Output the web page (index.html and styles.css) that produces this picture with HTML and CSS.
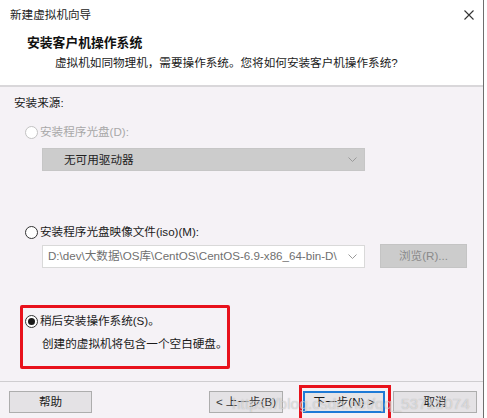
FILE: index.html
```html
<!DOCTYPE html>
<html lang="zh-CN">
<head>
<meta charset="utf-8">
<title>新建虚拟机向导</title>
<link rel="stylesheet" href="styles.css">
</head>
<body>
<div class="window">
  <div class="header">
    <div class="titlebar">
      <span class="title">新建虚拟机向导</span>
      <svg class="close" width="10" height="10" viewBox="0 0 10 10"><path d="M0.5 0.5 L9.5 9.5 M9.5 0.5 L0.5 9.5" stroke="#333" stroke-width="1.1" fill="none"/></svg>
    </div>
    <div class="heading">安装客户机操作系统</div>
    <div class="subtitle">虚拟机如同物理机，需要操作系统。您将如何安装客户机操作系统?</div>
  </div>

  <div class="content">
    <div class="src-label">安装来源:</div>

    <div class="option disabled opt1">
      <span class="radio"></span>
      <span>安装程序光盘(D):</span>
    </div>
    <div class="dropdown">
      <span>无可用驱动器</span>
      <svg class="chev" width="9" height="5" viewBox="0 0 9 5"><path d="M0.5 0.5 L4.5 4.5 L8.5 0.5" stroke="#9a9a9a" stroke-width="1" fill="none"/></svg>
    </div>

    <div class="option opt2">
      <span class="radio"></span>
      <span>安装程序光盘映像文件(iso)(M):</span>
    </div>
    <div class="iso-row">
      <div class="combo">
        <span class="path">D:\dev\大数据\OS库\CentOS\CentOS-6.9-x86_64-bin-D\</span>
        <svg class="chev" width="9" height="5" viewBox="0 0 9 5"><path d="M0.5 0.5 L4.5 4.5 L8.5 0.5" stroke="#9a9a9a" stroke-width="1" fill="none"/></svg>
      </div>
      <div class="browse">浏览(R)...</div>
    </div>

    <div class="later-box">
      <div class="option opt3">
        <span class="radio checked"></span>
        <span>稍后安装操作系统(S)。</span>
      </div>
      <div class="later-desc">创建的虚拟机将包含一个空白硬盘。</div>
    </div>
  </div>

  <div class="footer">
    <div class="btn help">帮助</div>
    <div class="spacer"></div>
    <div class="btn back">&lt; 上一步(B)</div>
    <div class="mark">
      <div class="btn next">下一步(N) &gt;</div>
    </div>
    <div class="btn cancel">取消</div>
    <div class="watermark">https://blog.csdn.net/qq_53715074</div>
  </div>
</div>
</body>
</html>
```

FILE: styles.css
```css
* { box-sizing: border-box; }

html, body {
  margin: 0;
  padding: 0;
  background: #ffffff;
}

body {
  font-family: "Liberation Sans", "Noto Sans CJK SC", sans-serif;
  font-size: 11.6px;
  line-height: 16px;
  color: #1a1a1a;
}

.window {
  width: 484px;
  height: 418px;
  background: #f5f2f6;
  border-right: 1px solid #6e6e6e;
  overflow: hidden;
  display: flex;
  flex-direction: column;
}

/* header */
.header {
  height: 87px;
  flex: none;
  background: #ffffff;
  border-bottom: 2px solid #d9d7da;
}

.titlebar {
  height: 30px;
  display: flex;
  align-items: center;
  justify-content: space-between;
  padding: 0 9px 0 10px;
}

.title {
  font-size: 11.6px;
  color: #222;
}

.close { display: block; }

.heading {
  margin-top: 5px;
  padding-left: 27px;
  font-size: 12.8px;
  font-weight: bold;
  color: #111;
}

.subtitle {
  margin-top: 4px;
  padding-left: 55px;
  color: #1a1a1a;
  white-space: nowrap;
}

/* content */
.content {
  flex: none;
  height: 294px;
  padding-left: 14px;
  display: flex;
  flex-direction: column;
  align-items: flex-start;
}

.src-label {
  margin-top: 8px;
}

.option {
  display: flex;
  align-items: center;
  gap: 2px;
  white-space: nowrap;
}

.radio {
  width: 13px;
  height: 13px;
  border-radius: 50%;
  border: 1px solid #333;
  background: #fff;
  display: inline-flex;
  align-items: center;
  justify-content: center;
  flex: none;
}

.radio.checked::after {
  content: "";
  width: 7px;
  height: 7px;
  border-radius: 50%;
  background: #1a1a1a;
}

.option.disabled { color: #a8a8a8; }
.option.disabled .radio { border-color: #c2c2c2; }

.opt1 {
  margin-top: 13px;
  margin-left: 11px;
}

.dropdown {
  margin-top: 8px;
  margin-left: 28px;
  width: 323px;
  height: 23px;
  background: #cccccc;
  border: 1px solid #c6c6c6;
  display: flex;
  align-items: center;
  justify-content: space-between;
  padding: 0 7px 0 21px;
  color: #222;
}

.opt2 {
  margin-top: 53px;
  margin-left: 11px;
}

.iso-row {
  margin-top: 4px;
  margin-left: 28px;
  display: flex;
  align-items: center;
  gap: 15px;
}

.combo {
  width: 323px;
  height: 23px;
  background: #fff;
  border: 1px solid #d9d9d9;
  display: flex;
  align-items: center;
  padding: 0 7px 0 5px;
  gap: 6px;
}

.combo .path {
  flex: 1;
  white-space: nowrap;
  overflow: hidden;
  color: #6f6f6f;
}

.chev { display: block; flex: none; }

.browse {
  width: 87px;
  height: 24px;
  background: #cccccc;
  border: 1px solid #c4c4c4;
  color: #8a8a8a;
  display: flex;
  align-items: center;
  justify-content: center;
}

.later-box {
  margin-top: 37px;
  margin-left: 6px;
  width: 210px;
  height: 64px;
  border: 3px solid #e8121c;
  border-radius: 2px;
  padding: 5px 0 0 2px;
}

.later-desc {
  margin-top: 7px;
  padding-left: 17px;
  white-space: nowrap;
}

/* footer */
.footer {
  position: relative;
  flex: 1;
  border-top: 1px solid #cfcdd0;
  display: flex;
  align-items: flex-start;
  padding: 0 6px 0 9px;
}

.spacer { flex: 1; }

.btn {
  height: 22px;
  margin-top: 9px;
  background: #e4e2e5;
  border: 1px solid #adadad;
  display: flex;
  align-items: center;
  justify-content: center;
  color: #1a1a1a;
  flex: none;
  white-space: nowrap;
}

.help { width: 83px; }

.back {
  width: 74px;
  margin-right: 16px;
  color: #333;
}

.mark {
  margin-top: 3px;
  border: 3px solid #e8121c;
  padding: 3px 3px 6px 1px;
  margin-right: 2px;
}

.next {
  margin-top: 0;
  width: 82px;
  border: 2px solid #1f7ad6;
  background: #e6e4e7;
}

.cancel { width: 84px; }

.watermark {
  position: absolute;
  left: 232px;
  top: 12px;
  font-family: "Liberation Sans", sans-serif;
  font-size: 15.5px;
  line-height: 20px;
  color: rgba(255, 255, 255, 0.5);
  text-shadow: 0 0 1px rgba(90, 90, 90, 0.45);
  white-space: nowrap;
  pointer-events: none;
}
```
